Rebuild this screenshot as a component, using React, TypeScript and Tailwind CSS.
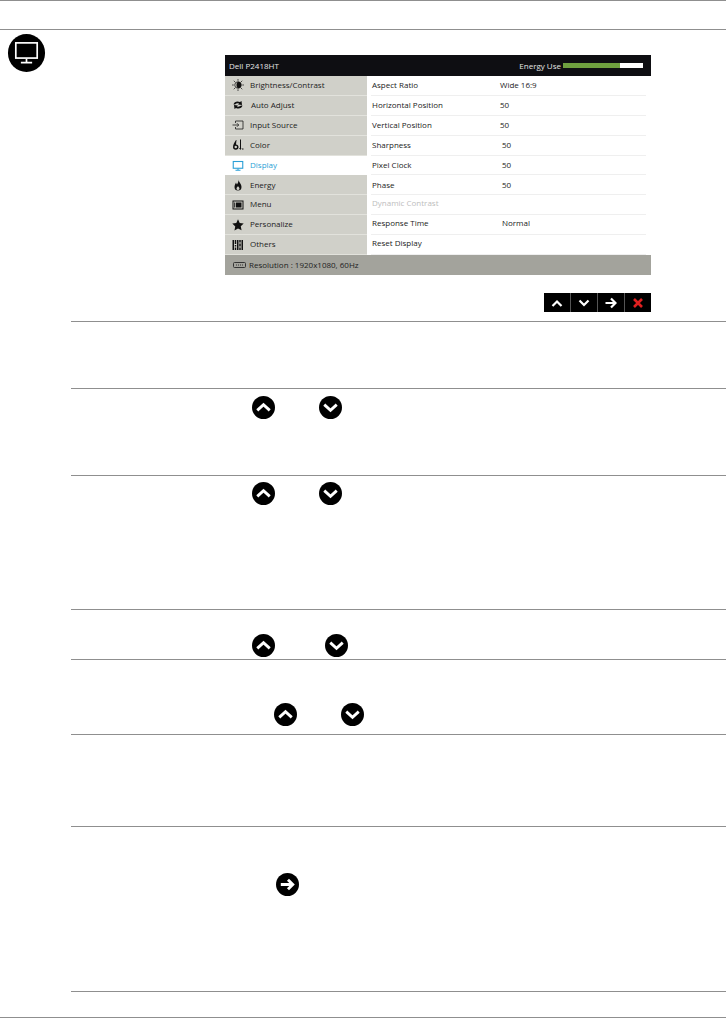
const font = "font-['Open_Sans',sans-serif]";

function Up() {
  return (
    <svg width="23" height="23" viewBox="0 0 24 24" className="block">
      <circle cx="12" cy="12" r="12" fill="#000" />
      <path d="M5.500 15 12 9l6.500 6" fill="none" stroke="#fff" strokeWidth="3" />
    </svg>
  );
}

function Down() {
  return (
    <svg width="23" height="23" viewBox="0 0 24 24" className="block">
      <circle cx="12" cy="12" r="12" fill="#000" />
      <path d="M5.500 9 12 15l6.500-6" fill="none" stroke="#fff" strokeWidth="3" />
    </svg>
  );
}

function Next() {
  return (
    <svg width="23" height="23" viewBox="0 0 24 24" className="block">
      <circle cx="12" cy="12" r="12" fill="#000" />
      <path d="M5 12h12M12.500 7l5 5-5 5" fill="none" stroke="#fff" strokeWidth="3" />
    </svg>
  );
}

function MonitorIcon({ color = "#fff", width = 1.5 }: { color?: string; width?: number }) {
  return (
    <svg viewBox="0 0 24 24" className="block h-full w-full">
      <rect x="2.500" y="3" width="19" height="13.500" fill="none" stroke={color} strokeWidth={width} />
      <path d="M12 17v3M7 20.500h10" fill="none" stroke={color} strokeWidth={width} />
    </svg>
  );
}

const menu = [
  { label: "Brightness/Contrast", icon: "sun", nudge: "" },
  { label: "Auto Adjust", icon: "auto", nudge: "" },
  { label: "Input Source", icon: "input", nudge: "" },
  { label: "Color", icon: "color", nudge: "" },
  { label: "Display", icon: "display", nudge: "pb-[2px]" },
  { label: "Energy", icon: "energy", nudge: "" },
  { label: "Menu", icon: "menu", nudge: "pb-[1px]" },
  { label: "Personalize", icon: "star", nudge: "pb-[1px]" },
  { label: "Others", icon: "others", nudge: "pb-[1px]" },
];

function MenuIcon({ name }: { name: string }) {
  if (name === "display") return <MonitorIcon color="#2a9fd6" width={2.200} />;
  return (
    <svg viewBox="0 0 24 24" className="block h-full w-full" fill="#111">
      {name === "sun" && (
        <>
          <circle cx="12" cy="12" r="6.500" fill="none" stroke="#111" strokeWidth="1.500" />
          <path d="M12 5.500a6.500 6.500 0 0 1 0 13z" />
          <path d="M9 12a3 6 0 0 1 3-6v12a3 6 0 0 1-3-6z" />
          <path d="M12 0v3.500M12 20.500V24M0 12h3.500M20.500 12H24M3.500 3.500l2.500 2.500M18 18l2.500 2.500M20.500 3.500 18 6M6 18l-2.500 2.500" stroke="#111" strokeWidth="1.400" />
        </>
      )}
      {name === "auto" && (
        <path d="M3 11c1-5 7-8 13-5l3-2 1 8-8-1 2-2c-3-1-6 0-8 2zM21 13c-1 5-7 8-13 5l-3 2-1-8 8 1-2 2c3 1 6 0 8-2z" />
      )}
      {name === "input" && (
        <path d="M7 8V4h15v16H7v-4M1 12h12M10 8.500l3.500 3.500-3.500 3.500" fill="none" stroke="#111" strokeWidth="1.500" />
      )}
      {name === "color" && (
        <>
          <path d="M8 2C5 7 2 11 2 16a5.500 5.500 0 0 0 11 0c0-3-2-5-5-5l1-9zM7.500 13.500a2.500 2.500 0 1 1 0 5 2.500 2.500 0 0 1 0-5z" fillRule="evenodd" />
          <path d="M16 1h2v17h1l-2 4-3-4h2z" />
          <path d="M20 19h3v2h-3z" />
        </>
      )}
      {name === "energy" && (
        <path d="M13 1c0 5 6 8 6 15a7 7 0 0 1-14 0c0-4 2-6 3-9 1 2 1 3 2 4 2-3 3-6 3-10zM12 14c-1 2-3 3-3 5a3 3 0 0 0 6 0c0-2-2-3-3-5z" fillRule="evenodd" />
      )}
      {name === "menu" && (
        <>
          <path d="M1 3h22v18H1zM3 5v14h18V5z" fillRule="evenodd" />
          <rect x="8" y="7" width="11" height="10" />
          <rect x="4.500" y="7" width="2" height="10" />
        </>
      )}
      {name === "star" && <path d="M12 .5l3.400 7.400 8 .9-5.900 5.500 1.600 8L12 18.800l-7.100 4 1.600-8L.6 8.800l8-.9z" />}
      {name === "others" && (
        <path d="M1 2h3v20H1zM5.500 2h3v8h-3zM5.500 12h3v3h-3zM5.500 17h3v5h-3zM10 2h3v20h-3zM14.500 2h3v5h-3zM14.500 9h3v6h-3zM14.500 17h3v5h-3zM19 2h3v20h-3z" />
      )}
    </svg>
  );
}

const settings = [
  { label: "Aspect Ratio", value: "Wide 16:9", col: "pl-[128px]", nudge: "" },
  { label: "Horizontal Position", value: "50", col: "pl-[128px]", nudge: "" },
  { label: "Vertical Position", value: "50", col: "pl-[128px]", nudge: "" },
  { label: "Sharpness", value: "50", col: "pl-[130px]", nudge: "" },
  { label: "Pixel Clock", value: "50", col: "pl-[130px]", nudge: "" },
  { label: "Phase", value: "50", col: "pl-[130px]", nudge: "" },
  { label: "Dynamic Contrast", value: "", col: "pl-[130px]", muted: true, nudge: "pb-[3px]" },
  { label: "Response Time", value: "Normal", col: "pl-[130px]", nudge: "pb-[3px]" },
  { label: "Reset Display", value: "", col: "pl-[130px]", nudge: "pb-[3px]" },
];

function Osd() {
  return (
    <div className={`${font} w-[426px] text-[8px] leading-none`}>
      <div className="flex h-[21px] items-center justify-between bg-[#0e0e12] pl-[4px] pr-[8px] text-[#e4e4e4]">
        <span>Dell P2418HT</span>
        <div className="flex items-center gap-[2px]">
          <span>Energy Use</span>
          <div className="flex h-[5px] w-[80px] bg-white">
            <div className="h-full w-[57px] bg-[#6fa03f]" />
          </div>
        </div>
      </div>
      <div className="flex">
        <div className="w-[142px] shrink-0">
          {menu.map((m) => (
            <div
              key={m.label}
              className={
                m.icon === "display"
                  ? "flex h-[19.9px] items-center bg-white text-[#2a9fd6]"
                  : "flex h-[19.9px] items-center border-b border-[#e2e2dc] bg-[#d0d0c9] text-[#222]"
              }
            >
              <span className="ml-[7px] h-[12px] w-[12px] shrink-0">
                <MenuIcon name={m.icon} />
              </span>
              <span className={`${m.icon === "auto" ? "ml-[7px]" : "ml-[6px]"} ${m.nudge} whitespace-nowrap`}>
                {m.label}
              </span>
            </div>
          ))}
        </div>
        <div className="ml-[4px] w-[275px]">
          {settings.map((s) => (
            <div
              key={s.label}
              className={`flex h-[19.9px] items-center border-b border-[#efefef] pl-[1px] ${s.nudge} ${
                s.muted ? "text-[#bdbdbd]" : "text-[#222]"
              }`}
            >
              <span className="w-0 whitespace-nowrap">{s.label}</span>
              <span className={`${s.col} whitespace-nowrap`}>{s.value}</span>
            </div>
          ))}
        </div>
      </div>
      <div className="flex h-[20px] items-center bg-[#a3a39c] pl-[8px] text-[#222]">
        <svg width="13" height="6" viewBox="0 0 13 6" className="mr-[3px]">
          <rect x=".5" y=".5" width="12" height="5" rx="1" fill="none" stroke="#333" />
          <path d="M3 3h7" stroke="#333" strokeDasharray="1 1" />
        </svg>
        <span>Resolution : 1920x1080, 60Hz</span>
      </div>
      <div className="mt-[18px] flex justify-end">
        <div className="flex h-[19px] w-[107px]">
          <div className="flex flex-1 items-center justify-center border-r border-[#555] bg-black">
            <svg width="12" height="12" viewBox="0 0 12 12">
              <path d="M1.500 9 6 4.500 10.500 9" fill="none" stroke="#fff" strokeWidth="2.200" />
            </svg>
          </div>
          <div className="flex flex-1 items-center justify-center border-r border-[#555] bg-black">
            <svg width="12" height="12" viewBox="0 0 12 12">
              <path d="M1.500 3.500 6 8l4.500-4.500" fill="none" stroke="#fff" strokeWidth="2.200" />
            </svg>
          </div>
          <div className="flex flex-1 items-center justify-center border-r border-[#555] bg-black">
            <svg width="12" height="12" viewBox="0 0 12 12">
              <path d="M.500 6h9M6 1.500 10.500 6 6 10.500" fill="none" stroke="#fff" strokeWidth="2.200" />
            </svg>
          </div>
          <div className="flex flex-1 items-center justify-center bg-black">
            <svg width="12" height="12" viewBox="0 0 12 12">
              <path d="M2 2l8 8M10 2l-8 8" fill="none" stroke="#e02020" strokeWidth="2.600" />
            </svg>
          </div>
        </div>
      </div>
    </div>
  );
}

function Row({ height, children }: { height: string; children?: React.ReactNode }) {
  return <div className={`${height} border-b border-[#8f8f8f]`}>{children}</div>;
}

export default function App() {
  return (
    <div className="h-[1018px] w-[726px] overflow-hidden bg-white">
      <div className="h-[30px] border-y border-[#8f8f8f]" />
      <div className="flex">
        <div className="w-[71px] shrink-0 pl-[8px] pt-[4px]">
          <div className="h-[38px] w-[37px] rounded-full bg-black p-[5px]">
            <MonitorIcon />
          </div>
        </div>
        <div className="w-[655px]">
          <Row height="h-[292px]">
            <div className="pl-[154px] pt-[25px]">
              <Osd />
            </div>
          </Row>
          <Row height="h-[67px]" />
          <Row height="h-[87px]">
            <div className="flex pl-[181px] pt-[7px]">
              <Up />
              <span className="ml-[44px]">
                <Down />
              </span>
            </div>
          </Row>
          <Row height="h-[134px]">
            <div className="flex pl-[181px] pt-[6px]">
              <Up />
              <span className="ml-[44px]">
                <Down />
              </span>
            </div>
          </Row>
          <Row height="h-[50px]">
            <div className="flex pl-[181px] pt-[24px]">
              <Up />
              <span className="ml-[50px]">
                <Down />
              </span>
            </div>
          </Row>
          <Row height="h-[75px]">
            <div className="flex pl-[203px] pt-[43px]">
              <Up />
              <span className="ml-[44px]">
                <Down />
              </span>
            </div>
          </Row>
          <Row height="h-[92px]" />
          <Row height="h-[165px]">
            <div className="pl-[205px] pt-[46px]">
              <Next />
            </div>
          </Row>
        </div>
      </div>
      <div className="mt-[25px] border-b border-[#8f8f8f]" />
    </div>
  );
}
